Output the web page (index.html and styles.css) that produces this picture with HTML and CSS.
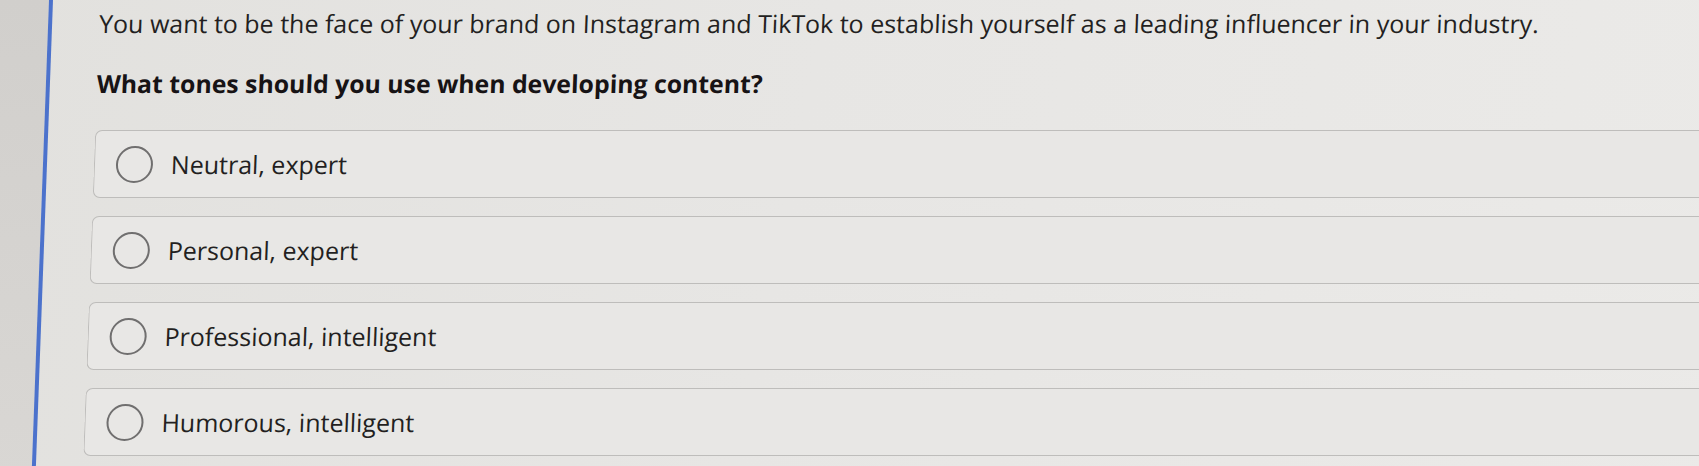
FILE: index.html
```html
<!DOCTYPE html>
<html>
<head>
<meta charset="utf-8">
<link rel="stylesheet" href="styles.css">
</head>
<body>
<div class="screen">
  <div class="sidebar"></div>
  <div class="rule"></div>
  <main class="content">
    <p class="prompt">You want to be the face of your brand on Instagram and TikTok to establish yourself as a leading influencer in your industry.</p>
    <p class="question">What tones should you use when developing content?</p>
    <ul class="options">
      <li class="option"><span class="radio"></span><span class="label">Neutral, expert</span></li>
      <li class="option"><span class="radio"></span><span class="label">Personal, expert</span></li>
      <li class="option"><span class="radio"></span><span class="label">Professional, intelligent</span></li>
      <li class="option"><span class="radio"></span><span class="label">Humorous, intelligent</span></li>
    </ul>
  </main>
</div>
</body>
</html>
```

FILE: styles.css
```css
html, body {
  margin: 0;
  padding: 0;
  width: 1699px;
  height: 466px;
  overflow: hidden;
  background: #e4e3e0;
}

.screen {
  display: flex;
  width: 1760px;
  height: 480px;
  transform: skewX(-2.1deg);
  transform-origin: 0 0;
  background: linear-gradient(100deg, #e2e1de 0%, #e7e6e4 45%, #ebeae8 100%);
  font-family: "Open Sans", "Noto Sans", sans-serif;
  color: #242022;
}

.sidebar {
  width: 49px;
  flex: none;
  background: linear-gradient(180deg, #d1cfcc 0%, #d9d7d4 100%);
}

.rule {
  width: 4px;
  flex: none;
  background: #4c72cc;
}

.content {
  flex: 1;
  padding: 7px 0 0 47px;
}

.prompt {
  margin: 0;
  font-size: 25px;
  line-height: 32px;
  color: #231f21;
}

.question {
  margin: 28px 0 0;
  font-size: 24.8px;
  line-height: 32px;
  font-weight: 700;
  color: #171315;
}

.options {
  list-style: none;
  margin: 31px 0 0;
  padding: 0;
  display: flex;
  flex-direction: column;
  gap: 18px;
}

.option {
  display: flex;
  align-items: center;
  height: 66px;
  border: 1px solid #bebdbb;
  border-right: none;
  border-radius: 7px 0 0 7px;
  background: #e8e7e5;
  padding-left: 21px;
}

.radio {
  width: 33px;
  height: 33px;
  flex: none;
  border: 2px solid #706f6f;
  border-radius: 50%;
  margin-right: 18px;
}

.label {
  font-size: 25px;
  line-height: 32px;
  color: #231f21;
}
```
